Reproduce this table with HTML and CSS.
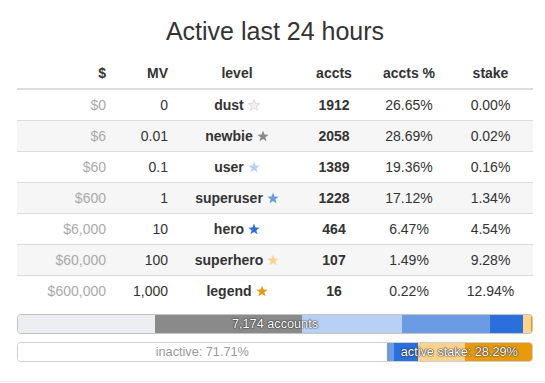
FILE: index.html
```html
<!DOCTYPE html>
<html>
<head>
<meta charset="utf-8">
<link rel="stylesheet" href="styles.css">
</head>
<body>
<div class="wrap">
  <h2 class="title">Active last 24 hours</h2>
  <table class="levels">
    <colgroup>
      <col class="c-usd"><col class="c-mv"><col class="c-level"><col class="c-accts"><col class="c-pct"><col class="c-stake">
    </colgroup>
    <thead>
      <tr><th class="r">$</th><th class="r">MV</th><th>level</th><th>accts</th><th>accts %</th><th>stake</th></tr>
    </thead>
    <tbody>
      <tr><td class="r usd">$0</td><td class="r">0</td><td class="lvl">dust<svg class="star s-dust" viewBox="0 0 12 12"><polygon points="6,0.5 7.47,4.48 11.71,4.65 8.38,7.27 9.53,11.35 6,9 2.47,11.35 3.62,7.27 0.29,4.65 4.53,4.48"/></svg></td><td class="b">1912</td><td>26.65%</td><td>0.00%</td></tr>
      <tr><td class="r usd">$6</td><td class="r">0.01</td><td class="lvl">newbie<svg class="star s-newbie" viewBox="0 0 12 12"><polygon points="6,0.5 7.47,4.48 11.71,4.65 8.38,7.27 9.53,11.35 6,9 2.47,11.35 3.62,7.27 0.29,4.65 4.53,4.48"/></svg></td><td class="b">2058</td><td>28.69%</td><td>0.02%</td></tr>
      <tr><td class="r usd">$60</td><td class="r">0.1</td><td class="lvl">user<svg class="star s-user" viewBox="0 0 12 12"><polygon points="6,0.5 7.47,4.48 11.71,4.65 8.38,7.27 9.53,11.35 6,9 2.47,11.35 3.62,7.27 0.29,4.65 4.53,4.48"/></svg></td><td class="b">1389</td><td>19.36%</td><td>0.16%</td></tr>
      <tr><td class="r usd">$600</td><td class="r">1</td><td class="lvl">superuser<svg class="star s-superuser" viewBox="0 0 12 12"><polygon points="6,0.5 7.47,4.48 11.71,4.65 8.38,7.27 9.53,11.35 6,9 2.47,11.35 3.62,7.27 0.29,4.65 4.53,4.48"/></svg></td><td class="b">1228</td><td>17.12%</td><td>1.34%</td></tr>
      <tr><td class="r usd">$6,000</td><td class="r">10</td><td class="lvl">hero<svg class="star s-hero" viewBox="0 0 12 12"><polygon points="6,0.5 7.47,4.48 11.71,4.65 8.38,7.27 9.53,11.35 6,9 2.47,11.35 3.62,7.27 0.29,4.65 4.53,4.48"/></svg></td><td class="b">464</td><td>6.47%</td><td>4.54%</td></tr>
      <tr><td class="r usd">$60,000</td><td class="r">100</td><td class="lvl">superhero<svg class="star s-superhero" viewBox="0 0 12 12"><polygon points="6,0.5 7.47,4.48 11.71,4.65 8.38,7.27 9.53,11.35 6,9 2.47,11.35 3.62,7.27 0.29,4.65 4.53,4.48"/></svg></td><td class="b">107</td><td>1.49%</td><td>9.28%</td></tr>
      <tr><td class="r usd">$600,000</td><td class="r">1,000</td><td class="lvl">legend<svg class="star s-legend" viewBox="0 0 12 12"><polygon points="6,0.5 7.47,4.48 11.71,4.65 8.38,7.27 9.53,11.35 6,9 2.47,11.35 3.62,7.27 0.29,4.65 4.53,4.48"/></svg></td><td class="b">16</td><td>0.22%</td><td>12.94%</td></tr>
    </tbody>
  </table>

  <div class="bar bar-accts">
    <div class="seg bg-dust" style="width:26.65%"></div>
    <div class="seg bg-newbie" style="width:28.69%"></div>
    <div class="seg bg-user" style="width:19.36%"></div>
    <div class="seg bg-superuser" style="width:17.12%"></div>
    <div class="seg bg-hero" style="width:6.47%"></div>
    <div class="seg bg-superhero" style="width:1.49%"></div>
    <div class="seg bg-legend" style="width:0.22%"></div>
    <span class="bar-label label-light">7,174 accounts</span>
  </div>

  <div class="bar bar-stake">
    <div class="seg seg-inactive" style="width:71.71%"><span class="inactive-label">inactive: 71.71%</span></div>
    <div class="seg bg-newbie" style="width:0.02%"></div>
    <div class="seg bg-user" style="width:0.16%"></div>
    <div class="seg bg-superuser" style="width:1.34%"></div>
    <div class="seg bg-hero" style="width:4.54%"></div>
    <div class="seg bg-superhero" style="width:9.28%"></div>
    <div class="seg bg-legend" style="width:12.94%"></div>
    <span class="bar-label label-light active-label" style="left:71.71%">active stake: 28.29%</span>
  </div>
</div>
<div class="foot-rule"></div>
</body>
</html>
```

FILE: styles.css
```css
* { box-sizing: border-box; }

html, body {
  margin: 0;
  padding: 0;
  background: #fff;
}

body {
  width: 545px;
  height: 383px;
  overflow: hidden;
  font-family: "Liberation Sans", Arial, sans-serif;
  font-size: 14px;
  color: #333;
}

.wrap {
  padding: 0 12px 0 17px;
}

.title {
  margin: 17px 0 13px;
  font-size: 25px;
  font-weight: normal;
  line-height: 28px;
  text-align: center;
  color: #333;
}

.levels {
  width: 516px;
  table-layout: fixed;
  border-collapse: separate;
  border-spacing: 0;
  margin-bottom: 8px;
}

.c-usd { width: 97px; }
.c-mv { width: 62px; }
.c-level { width: 122px; }
.c-accts { width: 72px; }
.c-pct { width: 78px; }
.c-stake { width: 85px; }

.levels th,
.levels td {
  padding: 5px 8px;
  line-height: 20px;
  text-align: center;
  white-space: nowrap;
}

.levels th {
  font-weight: bold;
  border-bottom: 2px solid #ddd;
}

.levels td {
  border-top: 1px solid #ddd;
}

.levels tbody tr:first-child td {
  border-top: 0;
}

.levels tbody tr:nth-child(even) td {
  background: #f6f6f6;
}

.levels .r { text-align: right; }
.levels .b { font-weight: bold; }
.levels .usd { color: #aaa; }
.levels .lvl { font-weight: bold; }

.star {
  width: 12px;
  height: 12px;
  margin-left: 4px;
  vertical-align: -1px;
}

.s-dust { fill: #f2f2f4; stroke: #d4d4d8; stroke-width: 0.8; }
.s-newbie { fill: #8a8a8a; }
.s-user { fill: #b7d0f6; }
.s-superuser { fill: #6b9be4; }
.s-hero { fill: #2b6fdc; }
.s-superhero { fill: #fbd38c; }
.s-legend { fill: #e69a0c; }

.bar {
  position: relative;
  display: flex;
  width: 516px;
  height: 20px;
  border: 1px solid #c4c4c4;
  border-radius: 4px;
  overflow: hidden;
  background: #fff;
}

.bar-stake {
  margin-top: 8px;
  border-color: #d0d0d0;
}

.seg {
  height: 100%;
  flex: none;
}

.bg-dust { background: #eceef1; }
.bg-newbie { background: #8a8a8a; }
.bg-user { background: #b7d0f6; }
.bg-superuser { background: #6b9be4; }
.bg-hero { background: #2b6fdc; }
.bg-superhero { background: #fbd38c; }
.bg-legend { background: #e69a0c; }

.seg-inactive {
  display: flex;
  align-items: center;
  justify-content: center;
  background: #fff;
}

.inactive-label {
  font-size: 12.7px;
  line-height: 18px;
  color: #999;
}

.bar-label {
  position: absolute;
  top: 0;
  left: 0;
  right: 0;
  line-height: 18px;
  font-size: 12.7px;
  text-align: center;
  white-space: nowrap;
}

.label-light {
  color: #fff;
  text-shadow: 0 0 1px #333, 0 0 1px #333, 0 0 2px rgba(0, 0, 0, 0.6);
}

.active-label {
  right: 0;
}

.foot-rule {
  margin-top: 19px;
  border-top: 1px solid #eee;
}
```
